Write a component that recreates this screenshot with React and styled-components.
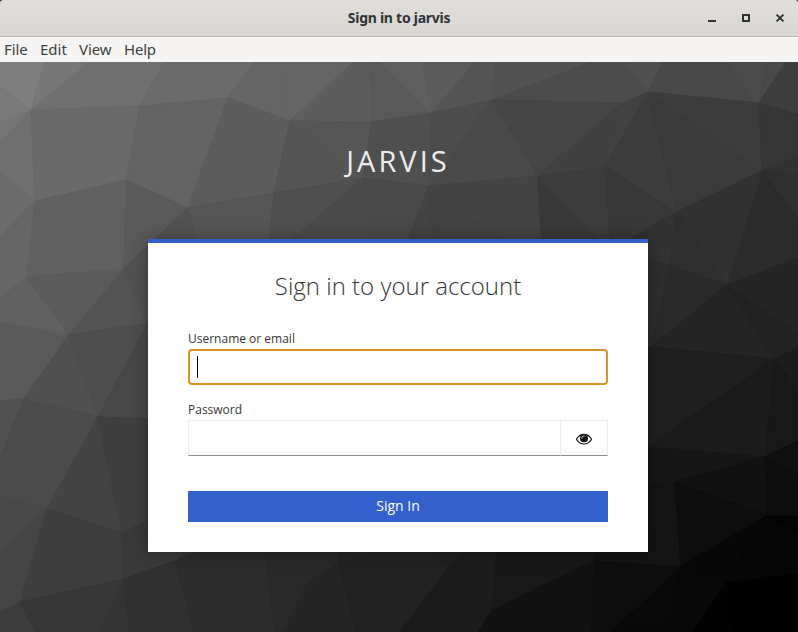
import React from "react";
import styled, { createGlobalStyle } from "styled-components";

const GlobalStyle = createGlobalStyle`
  * { box-sizing: border-box; }
  html, body { margin: 0; padding: 0; background: #111; overflow: hidden; }
`;

const Window = styled.div`
  width: 798px;
  height: 632px;
  display: flex;
  flex-direction: column;
  overflow: hidden;
  border-radius: 3px 3px 0 0;
  font-family: "Open Sans", "Noto Sans", sans-serif;
`;

const TitleBar = styled.header`
  flex: none;
  height: 37px;
  display: grid;
  grid-template-columns: 1fr auto 1fr;
  align-items: center;
  background: linear-gradient(#e1dedb, #dad6d2);
  border-bottom: 1px solid #bfb8b1;
  color: #2e3436;
`;

const Title = styled.h1`
  grid-column: 2;
  margin: 0 0 1px;
  font: 700 14px/20px "Noto Sans", sans-serif;
  letter-spacing: ${(p) => p.$tracking};
`;

const Controls = styled.div`
  display: flex;
  justify-content: flex-end;
  gap: 18px;
  padding-right: 10px;
`;

const ControlButton = styled.button`
  display: flex;
  width: 16px;
  height: 16px;
  padding: 0;
  border: 0;
  background: none;
  color: #2e3436;
`;

const MenuBar = styled.nav`
  flex: none;
  height: 25px;
  display: flex;
  align-items: center;
  gap: 12px;
  padding: 0 4px;
  background: #f6f5f4;
`;

const MenuItem = styled.span`
  width: ${(p) => p.$width}px;
  font: 400 15px/23px "Noto Sans", sans-serif;
  letter-spacing: ${(p) => p.$tracking}px;
  white-space: nowrap;
  color: #3c4244;
`;

const Stage = styled.main`
  flex: 1;
  display: grid;
  background: #333;
  overflow: hidden;
`;

const Backdrop = styled.svg`
  grid-area: 1 / 1;
  display: block;
`;

const Content = styled.div`
  grid-area: 1 / 1;
  z-index: 1;
  display: flex;
  flex-direction: column;
  width: 500px;
  margin-left: 148px;
`;

const Brand = styled.div`
  margin-top: 78px;
  height: 99px;
  text-align: center;
  font-size: 29px;
  line-height: 42px;
  letter-spacing: 3px;
  color: #ededed;
`;

const Card = styled.form`
  height: 313px;
  padding: 27px 40px 0;
  display: flex;
  flex-direction: column;
  background: #fff;
  border-top: 4px solid #3360cb;
  box-shadow: 0 0 16px rgba(3, 3, 3, 0.32);
`;

const Heading = styled.h2`
  margin: 0 0 29px;
  text-align: center;
  font-weight: 300;
  font-size: 24px;
  line-height: 31px;
  color: #363636;
`;

const Label = styled.label`
  height: 19px;
  font-size: 12px;
  line-height: 18px;
  color: #363636;
`;

const FocusedField = styled.div`
  height: 36px;
  margin-bottom: 16px;
  padding: 5px 7px;
  border: 2px solid #db9423;
  border-radius: 4px;
`;

const Caret = styled.div`
  width: 1px;
  height: 22px;
  background: #000;
`;

const PasswordField = styled.div`
  display: flex;
  height: 36px;
  margin-bottom: 35px;
`;

const FieldCell = styled.div`
  flex: ${(p) => p.$flex};
  display: flex;
  align-items: center;
  justify-content: center;
  padding-top: 1px;
  border: 1px solid #ededed;
  border-left-width: ${(p) => (p.$joined ? 0 : 1)}px;
  border-bottom-color: #8a8d90;
`;

const Submit = styled.button`
  height: 31px;
  padding: 0 0 2px;
  border: 0;
  background: #3360cb;
  color: #fff;
  font: 400 14px/28px "Open Sans", sans-serif;
`;

/* Polygons of the low-poly backdrop: [grey level, points]. */
const faces = [
  [126, "0,62 45,62 31,110 0,86"],
  [121, "0,86 31,110 0,123"],
  [119, "45,62 90,62 31,110"],
  [112, "90,62 164,62 140,106 31,110"],
  [107, "164,62 254,62 228,98 140,106"],
  [101, "254,62 278,62 290,121 228,98"],
  [101, "278,62 354,62 290,121"],
  [93, "354,62 369,62 372,122 290,121"],
  [89, "369,62 381,62 432,113 372,122"],
  [95, "381,62 422,62 432,113"],
  [92, "422,62 475,62 432,113"],
  [85, "475,62 496,62 492,100 432,113"],
  [82, "496,62 592,62 492,100"],
  [76, "592,62 620,62 623,103 492,100"],
  [76, "620,62 626,62 648,92 623,103"],
  [80, "626,62 663,62 648,92"],
  [72, "663,62 726,62 759,103 648,92"],
  [75, "726,62 768,62 759,103"],
  [73, "768,62 786,62 759,103"],
  [62, "786,62 798,62 798,115 759,103"],
  [116, "0,123 31,110 0,144"],
  [112, "0,144 31,110 35,201 0,172"],
  [106, "31,110 140,106 126,180 35,201"],
  [99, "140,106 228,98 188,208 126,180"],
  [92, "228,98 274,193 188,208"],
  [93, "228,98 290,121 274,193"],
  [85, "290,121 363,178 274,193"],
  [86, "290,121 372,122 363,178"],
  [79, "372,122 432,113 429,186 363,178"],
  [76, "432,113 492,100 429,186"],
  [73, "492,100 538,176 429,186"],
  [69, "492,100 623,103 538,176"],
  [65, "623,103 605,167 538,176"],
  [66, "623,103 648,92 605,167"],
  [61, "648,92 677,212 605,167"],
  [58, "648,92 762,171 677,212"],
  [60, "648,92 759,103 762,171"],
  [54, "759,103 798,115 798,156 762,171"],
  [50, "762,171 798,156 798,174"],
  [47, "762,171 798,174 798,220"],
  [43, "762,171 798,220 798,258 727,285"],
  [49, "762,171 727,285 677,212"],
  [108, "0,172 35,201 0,237"],
  [102, "0,237 35,201 27,277 0,264"],
  [102, "0,264 27,277 0,298"],
  [96, "35,201 126,180 124,269 27,277"],
  [90, "126,180 188,208 124,269"],
  [82, "188,208 201,250 148,270 124,269"],
  [86, "188,208 274,193 268,250 201,250"],
  [79, "274,193 363,178 280,250 268,250"],
  [74, "363,178 374,250 280,250"],
  [73, "363,178 429,186 404,250 374,250"],
  [67, "429,186 433,250 404,250"],
  [66, "429,186 520,250 433,250"],
  [67, "429,186 538,176 542,250 520,250"],
  [57, "538,176 612,250 542,250"],
  [60, "538,176 605,167 611,250"],
  [56, "605,167 677,212 611,250"],
  [50, "677,212 670,266 611,250"],
  [47, "677,212 727,285 670,266"],
  [96, "0,298 27,277 69,335 0,323"],
  [91, "27,277 124,269 69,335"],
  [84, "124,269 148,324 69,335"],
  [81, "124,269 160,269 148,324"],
  [90, "0,323 69,335 24,399 0,401"],
  [80, "69,335 98,417 24,399"],
  [77, "69,335 148,323 98,417"],
  [71, "148,323 160,300 160,419 98,417"],
  [81, "0,401 24,399 0,458"],
  [75, "24,399 47,509 0,496 0,458"],
  [75, "24,399 98,417 47,509"],
  [67, "98,417 122,533 47,509"],
  [63, "98,417 160,419 160,514 122,533"],
  [72, "0,496 47,509 0,555"],
  [69, "0,555 47,509 20,602 0,598"],
  [68, "0,598 20,602 0,613"],
  [61, "47,509 122,533 124,579"],
  [62, "47,509 124,579 20,602"],
  [57, "122,533 160,515 195,540 175,561 124,579"],
  [61, "0,613 20,602 36,632 0,632"],
  [55, "20,602 124,579 100,632 36,632"],
  [51, "124,579 129,632 100,632"],
  [48, "124,579 175,561 194,632 129,632"],
  [44, "175,561 215,545 264,545 275,632 194,632"],
  [41, "264,545 340,545 338,564 308,582 284,632 275,632"],
  [37, "308,582 338,564 356,632 284,632"],
  [36, "340,545 395,545 338,564"],
  [34, "338,564 395,545 425,545 448,569"],
  [34, "338,564 448,569 400,632 356,632"],
  [32, "425,545 469,545 448,569"],
  [27, "448,569 440,632 400,632"],
  [27, "448,569 492,611 478,632 440,632"],
  [28, "448,569 469,545 497,545 492,611"],
  [24, "497,545 596,545 594,561 492,611"],
  [18, "492,611 491,632 478,632"],
  [18, "492,611 594,561 592,632 491,632"],
  [45, "640,258 670,266 651,347 640,347"],
  [42, "670,266 727,285 651,347"],
  [37, "727,285 775,359 651,347"],
  [34, "727,285 798,334 798,348 775,359"],
  [37, "727,285 798,258 798,334"],
  [31, "640,346 651,347 775,359 648,447 640,447"],
  [27, "775,359 765,457 648,447"],
  [24, "775,359 798,389 798,441 765,457"],
  [28, "775,359 798,348 798,389"],
  [22, "640,447 648,447 765,457 675,482"],
  [22, "640,447 675,482 640,487"],
  [17, "765,457 767,516 675,482"],
  [13, "765,457 798,476 798,516 767,516"],
  [15, "765,457 798,441 798,476"],
  [20, "640,487 675,482 681,567 594,561 596,545 640,545"],
  [13, "675,482 767,516 681,567"],
  [13, "594,561 681,567 612,632 592,632"],
  [9, "681,567 670,632 612,632"],
  [8, "681,567 726,583 693,632 670,632"],
  [7, "767,516 726,583 681,567"],
  [6, "767,516 798,532 798,574 726,583"],
  [4, "767,516 798,516 798,532"],
  [0, "726,583 798,574 798,614"],
  [1, "726,583 798,614 798,632 731,632"],
  [3, "726,583 731,632 693,632"],
];

const Mesh = () => (
  <Backdrop width="798" height="570" viewBox="0 62 798 570" aria-hidden="true">
    {faces.map(([level, points]) => {
      const fill = `rgb(${level},${level},${level})`;
      return (
        <polygon
          key={points}
          points={points}
          fill={fill}
          stroke={fill}
          strokeWidth="1.2"
          strokeLinejoin="bevel"
        />
      );
    })}
  </Backdrop>
);

const EyeIcon = () => (
  <svg width="18" height="14" viewBox="0 0 18 14" aria-hidden="true">
    <path d="M1.4 7.2C3.2 4.1 5.9 2.3 9 2.3s5.800 1.800 7.600 4.900C14.800 10.300 12.100 12 9 12s-5.800-1.700-7.600-4.800z" fill="#fff" stroke="#151515" strokeWidth="1.200" />
    <circle cx="9" cy="6.200" r="4" fill="#151515" />
    <path d="M6.700 6.200C6.700 4.900 7.700 4 9 4" fill="none" stroke="#fff" strokeWidth="0.800" strokeLinecap="round" />
  </svg>
);

export default function App() {
  return (
    <>
      <GlobalStyle />
      <Window>
        <TitleBar>
          <Title $tracking="-0.26px">Sign in to jarvis</Title>
          <Controls>
            <ControlButton type="button" aria-label="Minimize">
              <svg width="16" height="16" viewBox="0 0 16 16"><path d="M4 10h8v2H4z" fill="currentColor" /></svg>
            </ControlButton>
            <ControlButton type="button" aria-label="Maximize">
              <svg width="16" height="16" viewBox="0 0 16 16"><path d="M5 5h6v6H5z" fill="none" stroke="currentColor" strokeWidth="2" /></svg>
            </ControlButton>
            <ControlButton type="button" aria-label="Close">
              <svg width="16" height="16" viewBox="0 0 16 16"><path d="M4.600 4.600l6.800 6.800M11.400 4.600l-6.800 6.800" stroke="currentColor" strokeWidth="2" /></svg>
            </ControlButton>
          </Controls>
        </TitleBar>
        <MenuBar>
          <MenuItem $width={24} $tracking={-0.1}>File</MenuItem>
          <MenuItem $width={27} $tracking={0}>Edit</MenuItem>
          <MenuItem $width={33} $tracking={-0.1}>View</MenuItem>
          <MenuItem $width={32} $tracking={-0.2}>Help</MenuItem>
        </MenuBar>
        <Stage>
          <Mesh />
          <Content>
            <Brand>JARVIS</Brand>
            <Card>
              <Heading>Sign in to your account</Heading>
              <Label>Username or email</Label>
              <FocusedField><Caret /></FocusedField>
              <Label>Password</Label>
              <PasswordField>
                <FieldCell $flex="1" />
                <FieldCell $flex="0 0 47px" $joined><EyeIcon /></FieldCell>
              </PasswordField>
              <Submit type="button">Sign In</Submit>
            </Card>
          </Content>
        </Stage>
      </Window>
    </>
  );
}
